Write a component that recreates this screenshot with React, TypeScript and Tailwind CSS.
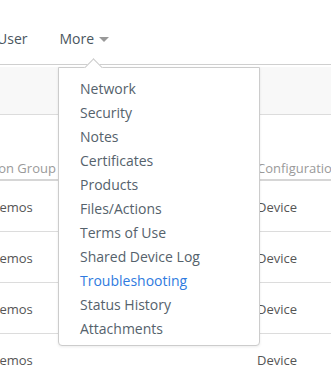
const items = [
  "Network",
  "Security",
  "Notes",
  "Certificates",
  "Products",
  "Files/Actions",
  "Terms of Use",
  "Shared Device Log",
  "Troubleshooting",
  "Status History",
  "Attachments",
];

const rows = ["Demos", "Demos", "Demos", "Demos"];

export default function App() {
  return (
    <div
      className="relative w-[331px] h-[371px] overflow-hidden bg-white"
      style={{ fontFamily: '"Open Sans", "Liberation Sans", sans-serif' }}
    >
      {/* top nav */}
      <div className="h-[65px] border-b border-[#cfcfcf] flex items-start pt-[28px] text-[14px] text-[#4a5660]">
        <span className="ml-[-3px] shrink-0">User</span>
        <span className="ml-[32px] flex items-center shrink-0">
          More
          <span className="ml-[5px] mt-[1px] w-0 h-0 border-l-[5px] border-r-[5px] border-t-[5px] border-l-transparent border-r-transparent border-t-[#999]" />
        </span>
      </div>

      {/* toolbar strip */}
      <div className="mt-[2px] h-[48px] bg-[#f8f8f8] border-b border-[#dcdcdc]" />

      {/* table */}
      <div className="text-[13px]">
        <div className="h-[66px] flex items-end pb-[1px] border-b-2 border-[#d6d6d6] text-[#9a9a9a]">
          <span className="ml-[-64px] w-[321px] shrink-0 whitespace-nowrap">Organization Group</span>
          <span className="shrink-0 whitespace-nowrap">Configuration Type</span>
        </div>
        {rows.map((r, i) => (
          <div key={i} className="h-[51px] flex items-center pt-[3px] border-b border-[#dcdcdc] text-[#555]">
            <span className="ml-[-10px] w-[267px] shrink-0 whitespace-nowrap">{r}</span>
            <span className="shrink-0">Device</span>
          </div>
        ))}
      </div>

      {/* dropdown */}
      <div className="absolute left-[58px] top-[67px] w-[202px] bg-white border border-[#cccccc] rounded-b-[4px] shadow-[0_1px_3px_rgba(0,0,0,0.08)] pt-[9px] pb-[4px] pl-[21px]">
        <div className="absolute left-[28px] top-[-7px] w-[13px] h-[13px] bg-white border-l border-t border-[#cccccc] rotate-45" />
        {items.map((it) => (
          <div
            key={it}
            className={`h-[24px] leading-[24px] text-[14px] ${
              it === "Troubleshooting" ? "text-[#2f7be0]" : "text-[#55626c]"
            }`}
          >
            {it}
          </div>
        ))}
      </div>
    </div>
  );
}
